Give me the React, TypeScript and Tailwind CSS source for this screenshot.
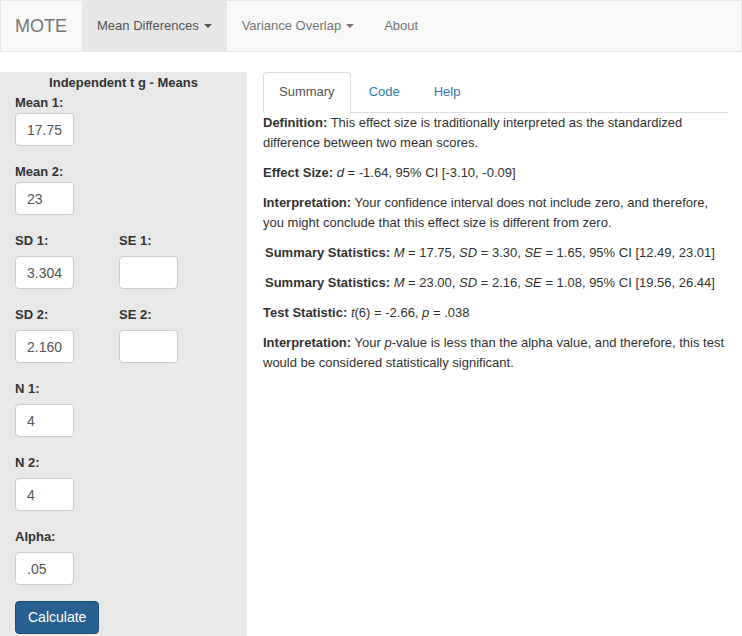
import React from "react";

function Caret() {
  return (
    <span className="inline-block w-0 h-0 ml-[5px] align-middle border-t-[4px] border-x-[4px] border-solid border-t-current border-x-transparent" />
  );
}

function Field({
  label,
  value,
  tight,
}: {
  label: string;
  value: string;
  tight?: boolean;
}) {
  return (
    <div className="mb-[16px]">
      <div className={`font-bold leading-[20px] ${tight ? "mb-0" : "mb-[5px]"}`}>{label}</div>
      <div className="w-[59px] h-[33px] bg-white border border-[#ccc] rounded-[4px] px-[11px] flex items-center text-[14px] text-[#555]">
        {value}
      </div>
    </div>
  );
}

export default function App() {
  return (
    <div className="font-['Liberation_Sans',Arial,sans-serif] text-[13px] leading-[20px] text-[#333] bg-white min-h-screen">
      <nav className="h-[52px] bg-[#f8f8f8] border border-[#e7e7e7] flex items-stretch">
        <div className="w-[81px] pl-[14px] flex items-center text-[18px] text-[#777]">MOTE</div>
        <div className="px-[15px] flex items-center bg-[#e7e7e7] text-[#555]">
          Mean Differences
          <Caret />
        </div>
        <div className="px-[15px] flex items-center text-[#777]">
          Variance Overlap
          <Caret />
        </div>
        <div className="px-[15px] flex items-center text-[#777]">About</div>
      </nav>

      <div className="mt-[20px] flex items-start">
        <div className="w-[247px] bg-[#e8e8e8] px-[15px] pb-[20px] min-h-[570px]">
          <div className="text-center font-bold leading-[21px]">Independent t g - Means</div>
          <Field label="Mean 1:" value="17.75" tight />
          <Field label="Mean 2:" value="23" tight />
          <div className="grid grid-cols-[104px_1fr]">
            <Field label="SD 1:" value="3.304" />
            <Field label="SE 1:" value="" />
            <Field label="SD 2:" value="2.160" />
            <Field label="SE 2:" value="" />
          </div>
          <Field label="N 1:" value="4" />
          <Field label="N 2:" value="4" />
          <Field label="Alpha:" value=".05" />
          <button className="h-[33px] px-[12px] bg-[#286090] border border-[#204d74] rounded-[4px] text-white text-[14px] leading-[19px]">
            Calculate
          </button>
        </div>

        <div className="ml-[16px] w-[465px]">
          <div className="flex border-b border-[#ddd]">
            <div className="-mb-px mr-[2px] px-[15px] pt-[9px] pb-[10px] border border-[#ddd] border-b-transparent rounded-t-[4px] bg-white text-[#555]">
              Summary
            </div>
            <div className="-mb-px mr-[2px] px-[15px] pt-[9px] pb-[10px] border border-transparent text-[#337ab7]">
              Code
            </div>
            <div className="-mb-px mr-[2px] px-[15px] pt-[9px] pb-[10px] border border-transparent text-[#337ab7]">
              Help
            </div>
          </div>

          <div className="whitespace-nowrap">
            <p className="mb-[10px]">
              <b>Definition:</b> This effect size is traditionally interpreted as the standardized
              <br />
              difference between two mean scores.
            </p>
            <p className="mb-[10px]">
              <b>Effect Size:</b> <i>d</i> = -1.64, 95% CI [-3.10, -0.09]
            </p>
            <p className="mb-[10px]">
              <b>Interpretation:</b> Your confidence interval does not include zero, and therefore,
              <br />
              you might conclude that this effect size is different from zero.
            </p>
            <p className="mb-[10px] pl-[2px]">
              <b>Summary Statistics:</b> <i>M</i> = 17.75, <i>SD</i> = 3.30, <i>SE</i> = 1.65, 95% CI [12.49, 23.01]
            </p>
            <p className="mb-[10px] pl-[2px]">
              <b>Summary Statistics:</b> <i>M</i> = 23.00, <i>SD</i> = 2.16, <i>SE</i> = 1.08, 95% CI [19.56, 26.44]
            </p>
            <p className="mb-[10px]">
              <b>Test Statistic:</b> <i>t</i>(6) = -2.66, <i>p</i> = .038
            </p>
            <p className="mb-[10px]">
              <b>Interpretation:</b> Your <i>p</i>-value is less than the alpha value, and therefore, this test
              <br />
              would be considered statistically significant.
            </p>
          </div>
        </div>
      </div>
    </div>
  );
}
